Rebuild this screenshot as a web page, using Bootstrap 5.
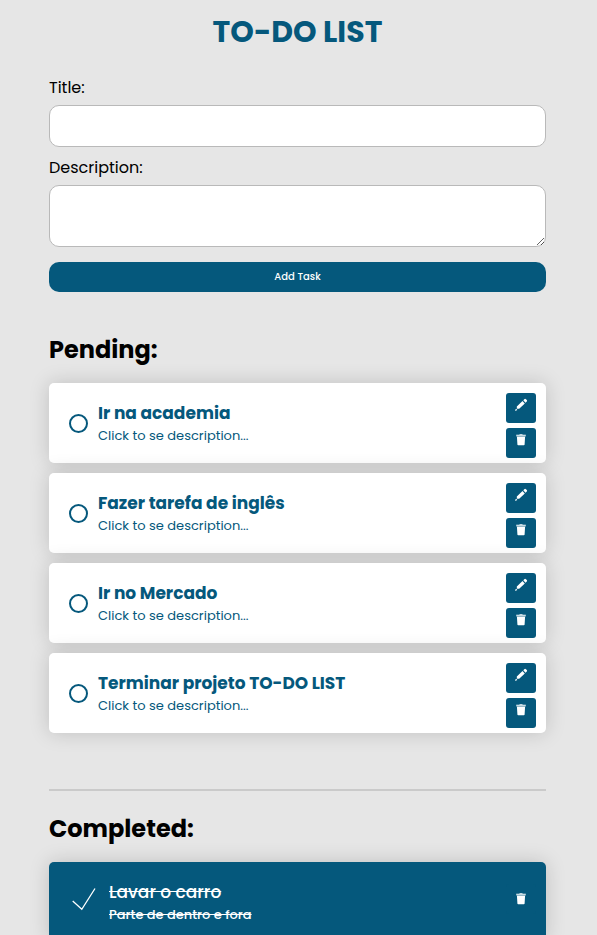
<!DOCTYPE html>
<html lang="en">
<head>
<meta charset="utf-8">
<meta name="viewport" content="width=device-width, initial-scale=1">
<title>TO-DO LIST</title>
<link href="https://cdn.jsdelivr.net/npm/bootstrap@5.3.0/dist/css/bootstrap.min.css" rel="stylesheet">
<style>
  :root { --brand: #05587c; }
  body { background: #e6e6e6; color: #000; font-family: Poppins, Inter, "Open Sans", sans-serif; }
  .page { padding: 8px 51px 40px 49px; }
  .page-title { color: var(--brand); font-size: 30px; font-weight: 700; line-height: 48px; margin-bottom: 20px; }
  .field-label { font-size: 16px; line-height: 24px; margin-bottom: 5px; }
  .field { border: 1px solid #b9b9b9; border-radius: 10px; background: #fff; }
  .field-line { height: 42px; margin-bottom: 9px; }
  .field-area { height: 62px; min-height: 62px; margin-bottom: 15px; resize: both; }
  .btn-add { height: 30px; border-radius: 10px; padding: 0 12px 2px; background: var(--brand); color: #fff; font-size: 10px; font-weight: 500; line-height: 15px; }
  .btn-add:hover, .btn-tool:hover { background: #04496a; color: #fff; }
  .section-title { font-size: 24px; font-weight: 700; line-height: 36px; margin-bottom: 15px; }
  .pending { margin-top: 40px; }
  .task { min-height: 80px; border-radius: 5px; background: #fff; color: var(--brand); padding: 0 10px 0 20px; box-shadow: 0 0 20px rgba(0, 0, 0, .17); }
  .task-list { gap: 10px; }
  .task-text { padding-top: 2px; }
  .task-name { font-size: 17px; font-weight: 700; line-height: 24px; margin: 0; }
  .task-note { font-size: 13px; line-height: 22px; margin: 0; }
  .task-check { appearance: none; flex: none; width: 19px; height: 19px; margin: 0 10px 0 0; border: 2px solid var(--brand); border-radius: 50%; background: transparent; }
  .btn-tool { display: flex; justify-content: center; align-items: flex-start; width: 30px; height: 30px; padding: 6px 0 0; border: 0; border-radius: 3px; background: var(--brand); color: #fff; }
  .btn-edit { padding-top: 5px; }
  .tools { gap: 5px; padding-top: 5px; }
  .divider { height: 2px; border: 0; background: #cacaca; opacity: 1; margin: 56px 0 20px; }
  .task.done { min-height: 80px; background: var(--brand); color: #fff; padding: 0 10px 6px 23px; }
  .done .task-text { padding-top: 8px; }
  .done .task-name { font-weight: 500; text-decoration: line-through; }
  .done .task-note { font-weight: 500; text-decoration: line-through; }
  .done .btn-tool { align-items: center; padding: 0; }
  .done .task-check { width: 26px; height: 26px; margin-right: 11px; border: 0; border-radius: 0;
    background: url("data:image/svg+xml,%3Csvg xmlns='http://www.w3.org/2000/svg' viewBox='0 0 26 26' fill='none' stroke='white' stroke-width='1.3'%3E%3Cpath d='M.7 15L9.800 23.300 23 2.500'/%3E%3C/svg%3E") center / 26px 26px no-repeat; }
</style>
</head>
<body>
<svg class="d-none" aria-hidden="true">
  <symbol id="pencil" viewBox="0 0 14 14">
    <path fill="currentColor" d="M9.300 2.300l1.300-1.200q.7-.5 1.300.1l.9.900q.6.700 0 1.300l-1.300 1.300zM8.500 3.100l2.300 2.300-5.600 5.400-2.300-.1-.1-2.200zM2.200 10.800l1.100 1.100-1.500.9q-.9.200-.7-.7z"/>
  </symbol>
  <symbol id="trash" viewBox="0 0 12 12">
    <path fill="currentColor" d="M4.500 .3h3v.5h3.300v1H1.200v-1h3.300z"/>
    <path fill="currentColor" opacity=".55" d="M1.400 1.800h9.200v1H1.400z"/>
    <path fill="currentColor" d="M1.900 2.800h8.200L9.600 10.500q-.1.700-.8.700H3.200q-.7 0-.8-.7z"/>
  </symbol>
</svg>
<main class="page container-fluid">
  <h1 class="page-title text-center">TO-DO LIST</h1>
  <form>
    <label class="field-label d-block" for="title">Title:</label>
    <input class="field field-line form-control" id="title" type="text">
    <label class="field-label d-block" for="description">Description:</label>
    <textarea class="field field-area form-control" id="description"></textarea>
    <button class="btn btn-add w-100 border-0" type="button">Add Task</button>
  </form>

  <section class="pending">
    <h2 class="section-title">Pending:</h2>
    <ul class="task-list list-unstyled d-flex flex-column mb-0">
      <li class="task d-flex align-items-center">
        <input class="task-check" type="checkbox" id="t1">
        <label class="task-text flex-grow-1" for="t1"><span class="task-name d-block">Ir na academia</span><span class="task-note d-block">Click to se description...</span></label>
        <div class="tools d-flex flex-column">
          <button class="btn-tool btn-edit" type="button" aria-label="Edit"><svg width="14" height="14"><use href="#pencil"/></svg></button>
          <button class="btn-tool" type="button" aria-label="Delete"><svg width="12" height="12"><use href="#trash"/></svg></button>
        </div>
      </li>
      <li class="task d-flex align-items-center">
        <input class="task-check" type="checkbox" id="t2">
        <label class="task-text flex-grow-1" for="t2"><span class="task-name d-block">Fazer tarefa de inglês</span><span class="task-note d-block">Click to se description...</span></label>
        <div class="tools d-flex flex-column">
          <button class="btn-tool btn-edit" type="button" aria-label="Edit"><svg width="14" height="14"><use href="#pencil"/></svg></button>
          <button class="btn-tool" type="button" aria-label="Delete"><svg width="12" height="12"><use href="#trash"/></svg></button>
        </div>
      </li>
      <li class="task d-flex align-items-center">
        <input class="task-check" type="checkbox" id="t3">
        <label class="task-text flex-grow-1" for="t3"><span class="task-name d-block">Ir no Mercado</span><span class="task-note d-block">Click to se description...</span></label>
        <div class="tools d-flex flex-column">
          <button class="btn-tool btn-edit" type="button" aria-label="Edit"><svg width="14" height="14"><use href="#pencil"/></svg></button>
          <button class="btn-tool" type="button" aria-label="Delete"><svg width="12" height="12"><use href="#trash"/></svg></button>
        </div>
      </li>
      <li class="task d-flex align-items-center">
        <input class="task-check" type="checkbox" id="t4">
        <label class="task-text flex-grow-1" for="t4"><span class="task-name d-block">Terminar projeto TO-DO LIST</span><span class="task-note d-block">Click to se description...</span></label>
        <div class="tools d-flex flex-column">
          <button class="btn-tool btn-edit" type="button" aria-label="Edit"><svg width="14" height="14"><use href="#pencil"/></svg></button>
          <button class="btn-tool" type="button" aria-label="Delete"><svg width="12" height="12"><use href="#trash"/></svg></button>
        </div>
      </li>
    </ul>
  </section>

  <hr class="divider">

  <section>
    <h2 class="section-title">Completed:</h2>
    <ul class="task-list list-unstyled d-flex flex-column mb-0">
      <li class="task done d-flex align-items-center">
        <input class="task-check" type="checkbox" id="t5" checked>
        <label class="task-text flex-grow-1" for="t5"><span class="task-name d-block">Lavar o carro</span><span class="task-note d-block">Parte de dentro e fora</span></label>
        <button class="btn-tool" type="button" aria-label="Delete"><svg width="12" height="12"><use href="#trash"/></svg></button>
      </li>
    </ul>
  </section>
</main>
<script src="https://cdn.jsdelivr.net/npm/bootstrap@5.3.0/dist/js/bootstrap.bundle.min.js"></script>
</body>
</html>
